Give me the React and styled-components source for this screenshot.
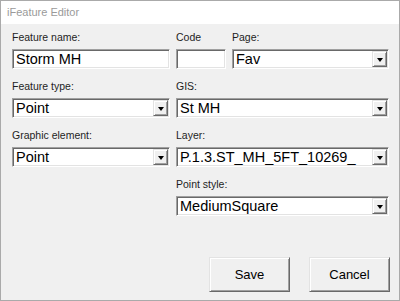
import React from "react";
import styled, { createGlobalStyle } from "styled-components";

const GlobalStyle = createGlobalStyle`
  html, body {
    margin: 0;
    padding: 0;
    background: #ffffff;
  }
  * {
    box-sizing: border-box;
  }
`;

const Window = styled.div`
  width: 400px;
  height: 301px;
  border: 1px solid #aaaaaa;
  background: #f0f0f0;
  display: flex;
  flex-direction: column;
  font-family: "Liberation Sans", Arial, sans-serif;
`;

const TitleBar = styled.div`
  height: 23px;
  background: #ffffff;
  color: #9a9a9a;
  font-size: 11px;
  line-height: 23px;
  padding-left: 6px;
`;

const Body = styled.div`
  flex: 1;
  display: flex;
  flex-direction: column;
  padding: 7px 9px 8px 11px;
`;

const Form = styled.div`
  display: grid;
  grid-template-columns: 158px 50px 157px;
  column-gap: 6px;
  row-gap: 11px;
`;

const Field = styled.div`
  display: flex;
  flex-direction: column;
  gap: 6px;
  grid-column: ${(p) => p.$col || "auto"};
`;

const Label = styled.div`
  font-size: 10.5px;
  line-height: 12px;
  color: #1e1e1e;
  white-space: nowrap;
`;

const sunken = `
  height: 20px;
  background: #ffffff;
  border-style: solid;
  border-width: 1px;
  border-color: #a0a0a0 #ffffff #ffffff #a0a0a0;
  box-shadow: inset 1px 1px 0 #696969, inset -1px -1px 0 #e3e3e3;
`;

const TextBox = styled.div`
  ${sunken}
  font-size: 14.5px;
  line-height: 18px;
  padding-left: 3px;
  color: #000;
  white-space: nowrap;
`;

const Combo = styled.div`
  ${sunken}
  display: flex;
  align-items: stretch;
  padding: 1px;
`;

const ComboText = styled.div`
  flex: 1;
  font-size: 14.5px;
  line-height: 16px;
  padding-left: 2px;
  color: #000;
  white-space: nowrap;
  overflow: hidden;
`;

const DropButton = styled.div`
  width: 15px;
  background: #f0f0f0;
  border-style: solid;
  border-width: 1px;
  border-color: #e3e3e3 #696969 #696969 #e3e3e3;
  box-shadow: inset 1px 1px 0 #ffffff, inset -1px -1px 0 #a0a0a0;
  display: flex;
  align-items: center;
  justify-content: center;
`;

const Arrow = styled.div`
  width: 0;
  height: 0;
  border-left: 3.5px solid transparent;
  border-right: 3.5px solid transparent;
  border-top: 4px solid #000;
  margin-top: 1px;
`;

const Actions = styled.div`
  margin-top: auto;
  display: flex;
  justify-content: flex-end;
  gap: 19px;
`;

const Button = styled.button`
  width: 81px;
  height: 35px;
  background: #f0f0f0;
  font-family: "Liberation Sans", Arial, sans-serif;
  font-size: 13px;
  color: #000;
  border-style: solid;
  border-width: 1px;
  border-color: #e3e3e3 #696969 #696969 #e3e3e3;
  box-shadow: inset 1px 1px 0 #ffffff, inset -1px -1px 0 #a0a0a0;
  padding: 0;
`;

const ComboBox = ({ value }) => (
  <Combo>
    <ComboText>{value}</ComboText>
    <DropButton>
      <Arrow />
    </DropButton>
  </Combo>
);

const App = () => {
  return (
    <>
      <GlobalStyle />
      <Window>
        <TitleBar>iFeature Editor</TitleBar>
        <Body>
          <Form>
            <Field>
              <Label>Feature name:</Label>
              <TextBox>Storm MH</TextBox>
            </Field>
            <Field>
              <Label>Code</Label>
              <TextBox />
            </Field>
            <Field>
              <Label>Page:</Label>
              <ComboBox value="Fav" />
            </Field>

            <Field>
              <Label>Feature type:</Label>
              <ComboBox value="Point" />
            </Field>
            <Field $col="2 / span 2">
              <Label>GIS:</Label>
              <ComboBox value="St MH" />
            </Field>

            <Field>
              <Label>Graphic element:</Label>
              <ComboBox value="Point" />
            </Field>
            <Field $col="2 / span 2">
              <Label>Layer:</Label>
              <ComboBox value="P.1.3.ST_MH_5FT_10269_" />
            </Field>

            <Field $col="2 / span 2">
              <Label>Point style:</Label>
              <ComboBox value="MediumSquare" />
            </Field>
          </Form>
          <Actions>
            <Button>Save</Button>
            <Button>Cancel</Button>
          </Actions>
        </Body>
      </Window>
    </>
  );
};

export default App;
